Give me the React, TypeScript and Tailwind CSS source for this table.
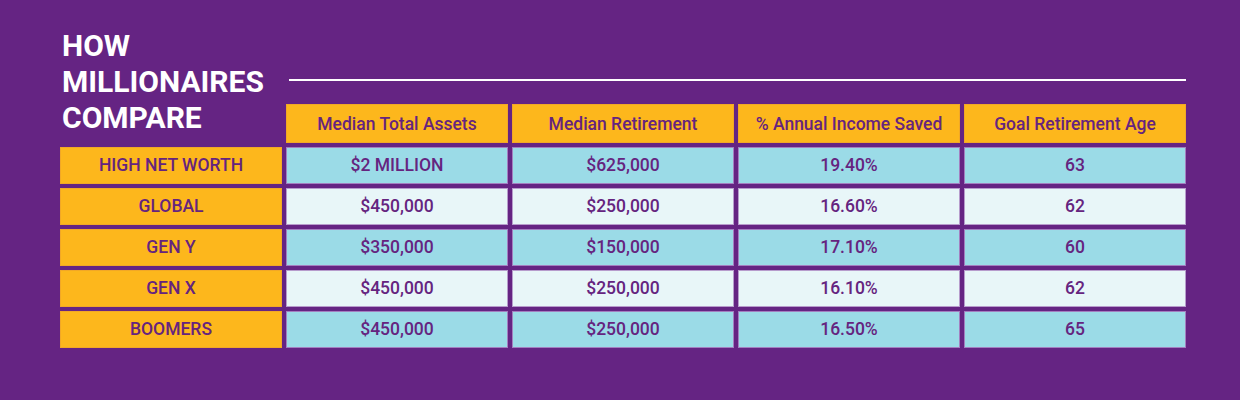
const columns = ['Median Total Assets', 'Median Retirement', '% Annual Income Saved', 'Goal Retirement Age']

const rows = [
  { label: 'HIGH NET WORTH', values: ['$2 MILLION', '$625,000', '19.40%', '63'] },
  { label: 'GLOBAL', values: ['$450,000', '$250,000', '16.60%', '62'] },
  { label: 'GEN Y', values: ['$350,000', '$150,000', '17.10%', '60'] },
  { label: 'GEN X', values: ['$450,000', '$250,000', '16.10%', '62'] },
  { label: 'BOOMERS', values: ['$450,000', '$250,000', '16.50%', '65'] },
]

export default function App() {
  return (
    <div
      className="h-[400px] w-full bg-[#652483] px-[60px] pt-[28px] text-[#65247f]"
      style={{ fontFamily: 'Roboto, "Liberation Sans", sans-serif' }}
    >
      <div className="grid w-[1126px] grid-cols-[repeat(5,222px)] gap-[4px]">
        {/* Title + header row */}
        <h1 className="self-start pl-[2px] text-[30px] font-bold leading-[36px] text-white">
          HOW
          <br />
          MILLIONAIRES
          <br />
          COMPARE
        </h1>
        <div className="col-span-4 flex flex-col pt-[51px]">
          <div className="ml-[3px] h-[2px] bg-white" />
          <div className="mt-[23px] grid grid-cols-4 gap-[4px]">
            {columns.map((c) => (
              <div
                key={c}
                className="flex h-[39px] items-center justify-center border border-[#f2a826] bg-[#fdb71c] pt-[2px] text-[17.5px] font-medium"
              >
                {c}
              </div>
            ))}
          </div>
        </div>

        {/* Data rows */}
        {rows.map((r, i) => (
          <div key={r.label} className="contents">
            <div className="flex h-[37px] items-center justify-center border border-[#f2a826] bg-[#fdb71c] text-[17.5px] font-medium">
              {r.label}
            </div>
            {r.values.map((v, j) => (
              <div
                key={j}
                className={
                  i % 2 === 0
                    ? 'flex h-[37px] items-center justify-center border border-[#a37fc0] bg-[#9bdbe7] text-[17.5px] font-medium'
                    : 'flex h-[37px] items-center justify-center border border-[#b79ccc] bg-[#e8f6f8] text-[17.5px] font-medium'
                }
              >
                {v}
              </div>
            ))}
          </div>
        ))}
      </div>
    </div>
  )
}
